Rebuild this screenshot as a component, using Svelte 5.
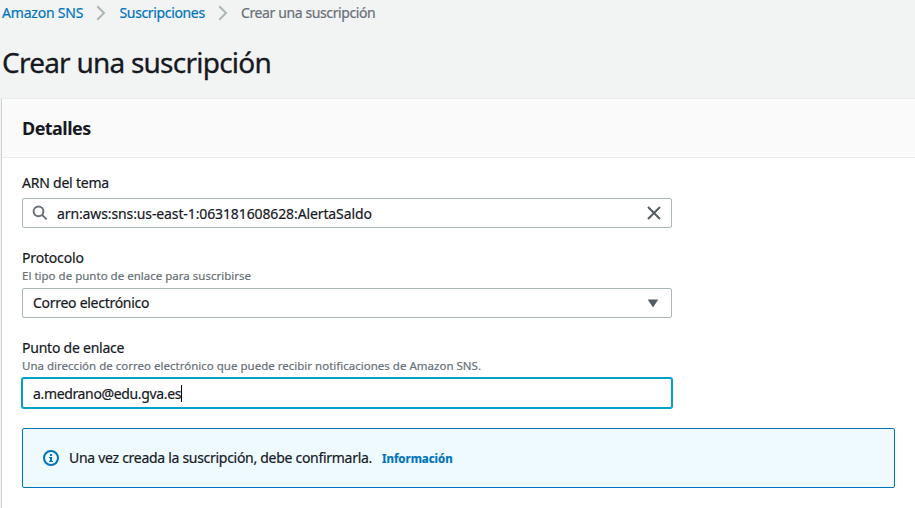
<script>
  const topic = 'arn:aws:sns:us-east-1:063181608628:AlertaSaldo';
  const protocol = 'Correo electrónico';
  const endpoint = 'a.medrano@edu.gva.es';
</script>

{#snippet chevron()}
  <svg class="chevron" width="10" height="16" viewBox="0 0 10 16"><path d="M1.3 1.2 8 8l-6.7 6.8" /></svg>
{/snippet}

<div class="page">
  <nav class="crumbs">
    <a class="c1" href="#sns">Amazon SNS</a>
    {@render chevron()}
    <a class="c2" href="#subs">Suscripciones</a>
    {@render chevron()}
    <span class="c3">Crear una suscripción</span>
  </nav>
  <h1>Crear una suscripción</h1>

  <section class="panel">
    <header><h2>Detalles</h2></header>
    <div class="body">
      <div class="field">
        <div class="label arn">ARN del tema</div>
        <div class="control search">
          <svg width="16" height="16" viewBox="0 0 16 16" class="glass"><circle cx="6.5" cy="6.3" r="4.9" /><path d="m10 9.9 4.7 4.5" /></svg>
          <span class="value topic">{topic}</span>
          <svg width="16" height="16" viewBox="0 0 16 16" class="clear"><path d="m2 2 12 12M14 2 2 14" /></svg>
        </div>
      </div>

      <div class="field">
        <div class="label proto">Protocolo</div>
        <div class="hint">El tipo de punto de enlace para suscribirse</div>
        <div class="control">
          <span class="value choice">{protocol}</span>
          <svg width="12" height="9" viewBox="0 0 12 9" class="caret"><path d="M.7.5h10.6L6 8.5Z" /></svg>
        </div>
      </div>

      <div class="field">
        <div class="label">Punto de enlace</div>
        <div class="hint">Una dirección de correo electrónico que puede recibir notificaciones de Amazon SNS.</div>
        <div class="control focus">
          <span class="value email">{endpoint}</span><i class="cursor"></i>
        </div>
      </div>

      <div class="alert">
        <svg width="16" height="16" viewBox="0 0 16 16" class="info"><circle cx="8" cy="8" r="7" /><path d="M7 4h2v2H7zM6 7h3v4h1v1H6v-1h1V8H6z" /></svg>
        <span class="message">Una vez creada la suscripción, debe confirmarla.</span>
        <a class="more" href="#info">Información</a>
      </div>
    </div>
  </section>
</div>

<style>
  :global(body) { margin: 0; background: #f2f3f3; overflow: hidden; }
  .page {
    height: 508px;
    overflow: hidden;
    display: flex;
    flex-direction: column;
    box-sizing: border-box;
    background: #f2f3f3;
    color: #16191f;
    font: 14px/20px 'Noto Sans', 'Open Sans', sans-serif;
    white-space: nowrap;
    -webkit-text-stroke: 0.2px;
  }
  a { color: #0073bb; text-decoration: none; }
  svg { flex: none; fill: none; }
  .crumbs { display: flex; align-items: center; height: 26px; padding-left: 2px; }
  .crumbs a, .crumbs span { flex: none; }
  .c1 { width: 94px; letter-spacing: -0.2px; }
  .c2 { width: 98px; margin-left: 0.5px; letter-spacing: -0.35px; }
  .c3 { margin-left: 0.5px; color: #687078; letter-spacing: -0.39px; }
  .chevron { width: 10px; margin-right: 13px; stroke: #aab7b8; stroke-width: 2; }
  h1 { margin: 18px 0 0; padding-left: 2px; font-size: 28px; line-height: 36px; font-weight: 400; letter-spacing: -0.77px; -webkit-text-stroke: 0.3px; }
  .panel { flex: 1; margin: 18px 0 0 1px; border-top: 1px solid #eaeded; border-left: 1px solid #ccd1d1; background: #fff; }
  header { height: 58px; display: flex; align-items: center; padding-left: 20px; background: #fafafa; border-bottom: 1px solid #eaeded; }
  h2 { margin: 0 0 1px; font-size: 18px; line-height: 22px; font-weight: 700; letter-spacing: -0.55px; -webkit-text-stroke: 0; }
  .body { display: flex; flex-direction: column; gap: 20px; padding: 15px 20px 0; }
  .field { width: 650px; }
  .label { letter-spacing: -0.23px; }
  .label.arn { margin-bottom: 5px; letter-spacing: -0.22px; }
  .label.proto { letter-spacing: -0.17px; }
  .hint { margin-bottom: 4px; color: #687078; font-size: 11.5px; line-height: 16px; letter-spacing: 0.01px; }
  .control { box-sizing: border-box; height: 30px; display: flex; align-items: center; padding: 0 10px; border: 1px solid #aab7b8; border-radius: 2px; background: #fff; }
  .focus { border-color: #00a1c9; box-shadow: 0 0 0 1px #00a1c9; }
  .glass { stroke: #687078; stroke-width: 2; margin: 0 9px 0 -1px; }
  .topic { flex: 1; padding-top: 2px; letter-spacing: -0.115px; }
  .clear { stroke: #545b64; stroke-width: 2; margin-right: -1px; }
  .choice { flex: 1; letter-spacing: -0.28px; }
  .caret { fill: #545b64; margin-right: 2px; }
  .email { padding-top: 2px; letter-spacing: -0.35px; }
  .cursor { width: 1px; height: 17px; background: #000; }
  .alert { box-sizing: border-box; width: 873px; height: 60px; display: flex; align-items: center; padding-left: 20px; border: 1px solid #0073bb; border-radius: 2px; background: #effaff; }
  .info circle { stroke: #0073bb; stroke-width: 2; }
  .info path { fill: #0073bb; }
  .message { margin-left: 10px; width: 313px; letter-spacing: -0.29px; }
  .more { padding-top: 2px; font-size: 11.5px; font-weight: 700; letter-spacing: -0.02px; }
</style>
